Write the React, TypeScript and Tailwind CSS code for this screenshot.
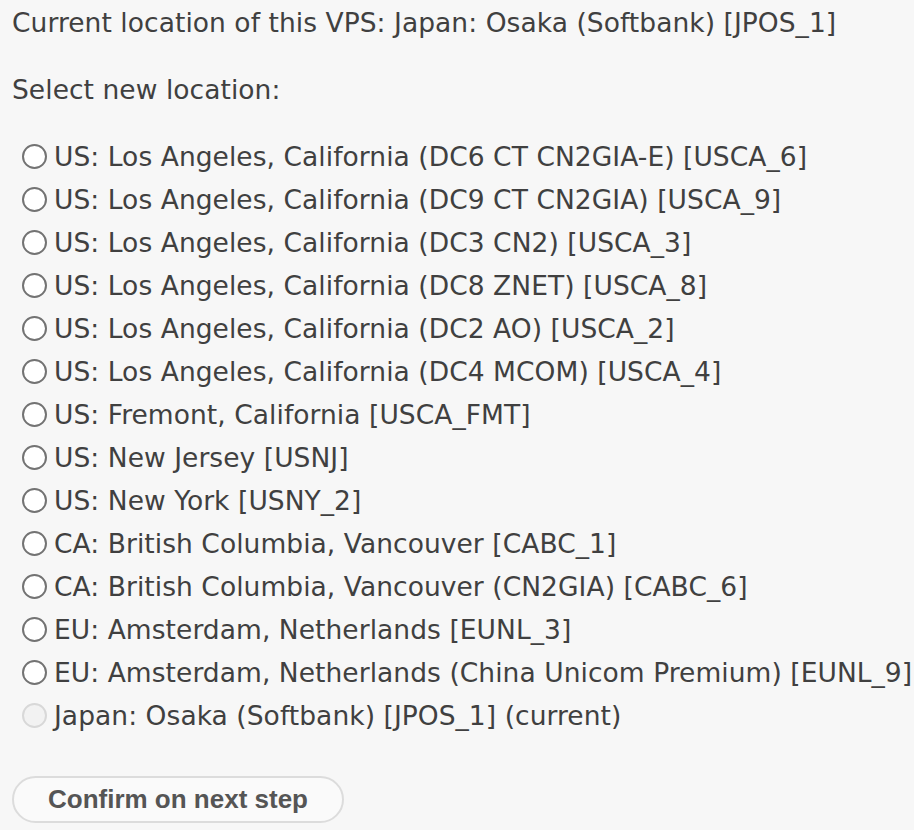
import React from 'react';

const locations = [
  'US: Los Angeles, California (DC6 CT CN2GIA-E) [USCA_6]',
  'US: Los Angeles, California (DC9 CT CN2GIA) [USCA_9]',
  'US: Los Angeles, California (DC3 CN2) [USCA_3]',
  'US: Los Angeles, California (DC8 ZNET) [USCA_8]',
  'US: Los Angeles, California (DC2 AO) [USCA_2]',
  'US: Los Angeles, California (DC4 MCOM) [USCA_4]',
  'US: Fremont, California [USCA_FMT]',
  'US: New Jersey [USNJ]',
  'US: New York [USNY_2]',
  'CA: British Columbia, Vancouver [CABC_1]',
  'CA: British Columbia, Vancouver (CN2GIA) [CABC_6]',
  'EU: Amsterdam, Netherlands [EUNL_3]',
  'EU: Amsterdam, Netherlands (China Unicom Premium) [EUNL_9]',
];

export default function App() {
  return (
    <div className="min-h-[830px] bg-[#f7f7f7] text-[#404040] text-[26.5px] tracking-[0.05px] leading-[43px] pl-[12px] pt-[1px] whitespace-nowrap overflow-hidden" style={{ fontFamily: '"DejaVu Sans", Verdana, sans-serif' }}>
      <p>Current location of this VPS: Japan: Osaka (Softbank) [JPOS_1]</p>
      <p className="mt-[24px]">Select new location:</p>

      <div className="mt-[24px] pl-[10px]">
        {locations.map((loc) => (
          <label key={loc} className="flex items-center">
            <span className="w-[25px] h-[25px] rounded-full border-2 border-[#737373] bg-white shrink-0 mr-[7px]" />
            <span>{loc}</span>
          </label>
        ))}
        <label className="flex items-center">
          <span className="w-[25px] h-[25px] rounded-full border-2 border-[#d8d8d8] bg-[#f2f2f2] shrink-0 mr-[7px]" />
          <span>Japan: Osaka (Softbank) [JPOS_1] (current)</span>
        </label>
      </div>

      <button className="mt-[39px] w-[332px] h-[47px] rounded-full border-2 border-[#dcdcdc] bg-[#fafafa] text-[#555] font-bold text-[26px] tracking-normal" style={{ fontFamily: '"Liberation Sans", Arial, sans-serif' }}>
        Confirm on next step
      </button>
    </div>
  );
}
